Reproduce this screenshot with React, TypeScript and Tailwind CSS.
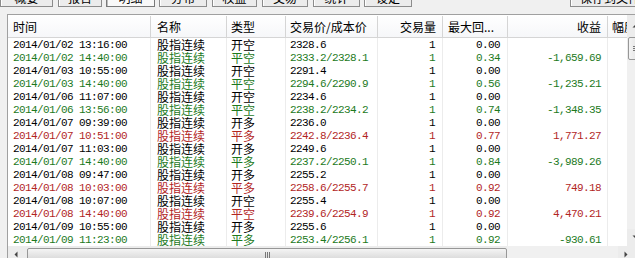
import React from "react";

type Row = {
  time: string;
  kind: string;
  price: string;
  dd: string;
  pnl: string;
  color: "k" | "g" | "r";
};

const rows: Row[] = [
  { time: "2014/01/02 13:16:00", kind: "开空", price: "2328.6", dd: "0.00", pnl: "", color: "k" },
  { time: "2014/01/02 14:40:00", kind: "平空", price: "2333.2/2328.1", dd: "0.34", pnl: "-1,659.69", color: "g" },
  { time: "2014/01/03 10:55:00", kind: "开空", price: "2291.4", dd: "0.00", pnl: "", color: "k" },
  { time: "2014/01/03 14:40:00", kind: "平空", price: "2294.6/2290.9", dd: "0.56", pnl: "-1,235.21", color: "g" },
  { time: "2014/01/06 11:07:00", kind: "开空", price: "2234.6", dd: "0.00", pnl: "", color: "k" },
  { time: "2014/01/06 13:56:00", kind: "平空", price: "2238.2/2234.2", dd: "0.74", pnl: "-1,348.35", color: "g" },
  { time: "2014/01/07 09:39:00", kind: "开多", price: "2236.0", dd: "0.00", pnl: "", color: "k" },
  { time: "2014/01/07 10:51:00", kind: "平多", price: "2242.8/2236.4", dd: "0.77", pnl: "1,771.27", color: "r" },
  { time: "2014/01/07 11:03:00", kind: "开多", price: "2249.6", dd: "0.00", pnl: "", color: "k" },
  { time: "2014/01/07 14:40:00", kind: "平多", price: "2237.2/2250.1", dd: "0.84", pnl: "-3,989.26", color: "g" },
  { time: "2014/01/08 09:47:00", kind: "开多", price: "2255.2", dd: "0.00", pnl: "", color: "k" },
  { time: "2014/01/08 10:03:00", kind: "平多", price: "2258.6/2255.7", dd: "0.92", pnl: "749.18", color: "r" },
  { time: "2014/01/08 10:07:00", kind: "开空", price: "2255.4", dd: "0.00", pnl: "", color: "k" },
  { time: "2014/01/08 14:40:00", kind: "平空", price: "2239.6/2254.9", dd: "0.92", pnl: "4,470.21", color: "r" },
  { time: "2014/01/09 10:55:00", kind: "开多", price: "2255.6", dd: "0.00", pnl: "", color: "k" },
  { time: "2014/01/09 11:23:00", kind: "平多", price: "2253.4/2256.1", dd: "0.92", pnl: "-930.61", color: "g" },
];

const colorClass = {
  k: "text-black",
  g: "text-[#1d7a1d]",
  r: "text-[#b2261f]",
};

const buttons = [
  { label: "概要", cls: "w-[53px]" },
  { label: "报告", cls: "ml-[5px] w-[44px]" },
  { label: "明细", cls: "ml-[4px] w-[49px]", pressed: true },
  { label: "分布", cls: "ml-[4px] w-[48px]" },
  { label: "权益", cls: "ml-[5px] w-[45px]" },
  { label: "交易", cls: "ml-[5px] w-[46px]" },
  { label: "统计", cls: "ml-[5px] w-[47px]" },
  { label: "设定", cls: "ml-[4px] w-[48px]" },
];

const mono = "font-['Liberation_Mono',monospace] text-[11px] tracking-[-0.6px]";
const cols = "grid grid-cols-[143px_76px_59px_92px_65px_65px_100px_19px]";

function Arrow({ dir }: { dir: "up" | "down" | "left" | "right" }) {
  const d = {
    up: "M0.5 4.5 L3.5 1.5 L6.5 4.5 Z",
    down: "M0.5 1.5 L3.5 4.5 L6.5 1.5 Z",
    left: "M4.5 0.5 L1.5 3.5 L4.5 6.5 Z",
    right: "M1.5 0.5 L4.5 3.5 L1.5 6.5 Z",
  }[dir];
  return (
    <svg width="7" height="7" viewBox="0 0 7 7">
      <path d={d} fill="#444" />
    </svg>
  );
}

function Toolbar() {
  return (
    <div className="flex h-[7px] items-end overflow-hidden">
      {buttons.map((b) => (
        <div
          key={b.label}
          className={`${b.cls} flex h-[20px] shrink-0 items-end justify-center border pb-[2px] leading-[12px] ${
            b.pressed
              ? "border-[#7a7a7a] bg-[#f9f9f9] shadow-[inset_1px_1px_0_#bdbdbd]"
              : "border-[#8c8c8c] bg-[#ececec] shadow-[inset_1px_1px_0_#ffffff]"
          }`}
        >
          {b.label}
        </div>
      ))}
      <div className="ml-[158px] flex h-[20px] w-[80px] shrink-0 items-end justify-center border border-[#8c8c8c] bg-[#ececec] pb-[2px] leading-[12px] shadow-[inset_1px_1px_0_#ffffff]">
        保存到文件
      </div>
    </div>
  );
}

function Header() {
  return (
    <div className={`${cols} h-[23px] border-b border-[#d5d5d5] bg-gradient-to-b from-white to-[#f6f7f9] pt-[1px] leading-[21px]`}>
      <div className="border-r border-[#d5d5d5] pl-[5px]">时间</div>
      <div className="border-r border-[#d5d5d5] pl-[6px]">名称</div>
      <div className="border-r border-[#d5d5d5] pl-[4px]">类型</div>
      <div className="border-r border-[#d5d5d5] pl-[4px]">交易价/成本价</div>
      <div className="border-r border-[#d5d5d5] pr-[6px] text-right">交易量</div>
      <div className="border-r border-[#d5d5d5] pl-[5px]">最大回...</div>
      <div className="border-r border-[#d5d5d5] pr-[6px] text-right">收益</div>
      <div className="overflow-hidden whitespace-nowrap pl-[4px]">幅度</div>
    </div>
  );
}

function DataRow({ r }: { r: Row }) {
  return (
    <div className={`${cols} h-[13px] leading-[13px] whitespace-nowrap ${colorClass[r.color]}`}>
      <div className={`${mono} border-r border-[#ececec] pl-[5px] pt-[1px] leading-[12px]`}>{r.time}</div>
      <div className="border-r border-[#ececec] pl-[6px]">股指连续</div>
      <div className="border-r border-[#ececec] pl-[4px]">{r.kind}</div>
      <div className={`${mono} border-r border-[#ececec] pl-[4px] pt-[1px] leading-[12px]`}>{r.price}</div>
      <div className={`${mono} border-r border-[#ececec] pr-[7px] pt-[1px] text-right leading-[12px]`}>1</div>
      <div className={`${mono} border-r border-[#ececec] pr-[7px] pt-[1px] text-right leading-[12px]`}>{r.dd}</div>
      <div className={`${mono} border-r border-[#ececec] pr-[6px] pt-[1px] text-right leading-[12px]`}>{r.pnl}</div>
      <div />
    </div>
  );
}

function VScroll() {
  return (
    <div className="flex w-[17px] shrink-0 flex-col bg-[#ececec]">
      <div className="flex h-[22px] items-center justify-center">
        <Arrow dir="up" />
      </div>
      <div className="mx-[1px] flex h-[23px] items-center justify-center rounded-[2px] border border-[#979797] bg-gradient-to-r from-[#f4f4f4] to-[#dcdcdc]">
        <div className="flex flex-col gap-[1px]">
          <div className="h-px w-[6px] bg-[#777]" />
          <div className="h-px w-[6px] bg-[#777]" />
          <div className="h-px w-[6px] bg-[#777]" />
        </div>
      </div>
      <div className="flex-1 bg-[#f0f0f0]" />
      <div className="flex h-[17px] items-center justify-center">
        <Arrow dir="down" />
      </div>
    </div>
  );
}

function HScroll() {
  return (
    <div className="flex h-[17px] shrink-0 bg-[#ececec]">
      <div className="flex w-[17px] items-center justify-center">
        <Arrow dir="left" />
      </div>
      <div className="my-[2px] ml-[2px] flex w-[480px] items-center justify-center rounded-[2px] border border-[#979797] bg-gradient-to-b from-[#f4f4f4] to-[#d8d8d8]">
        <div className="flex gap-[1px]">
          <div className="h-[6px] w-px bg-[#777]" />
          <div className="h-[6px] w-px bg-[#777]" />
          <div className="h-[6px] w-px bg-[#777]" />
        </div>
      </div>
      <div className="flex-1 bg-[#f0f0f0]" />
      <div className="flex w-[17px] items-center justify-center">
        <Arrow dir="right" />
      </div>
      <div className="w-[17px] bg-[#f0f0f0]" />
    </div>
  );
}

export default function App() {
  return (
    <div className="h-[258px] w-[635px] overflow-hidden bg-[#f0f0f0] font-['Noto_Sans_CJK_SC',sans-serif] text-[12px] text-black">
      <Toolbar />
      <div className="ml-[7px] mt-[7px] flex w-[645px] flex-col border-l border-t border-[#a0a0a0] bg-white">
        <div className="flex h-[231px]">
          <div className="flex w-[619px] shrink-0 flex-col">
            <Header />
            {rows.map((r, i) => (
              <DataRow key={i} r={r} />
            ))}
          </div>
          <VScroll />
        </div>
        <HScroll />
      </div>
    </div>
  );
}
